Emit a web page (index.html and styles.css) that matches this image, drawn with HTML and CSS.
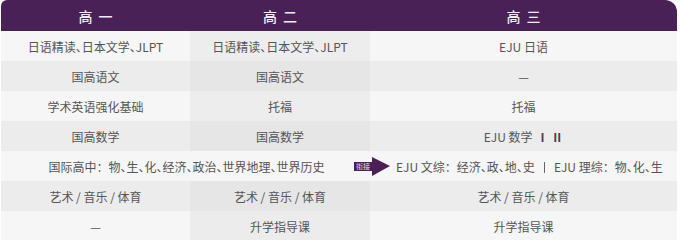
FILE: index.html
```html
<!DOCTYPE html>
<html lang="zh">
<head>
<meta charset="utf-8">
<link rel="stylesheet" href="styles.css">
</head>
<body>
<div class="table">
  <div class="head">高 一</div>
  <div class="head">高 二</div>
  <div class="head head-last">高 三</div>

  <div class="cell light">日语精读、日本文学、JLPT</div>
  <div class="cell light mid">日语精读、日本文学、JLPT</div>
  <div class="cell light">EJU 日语</div>

  <div class="cell dark">国高语文</div>
  <div class="cell dark mid">国高语文</div>
  <div class="cell dark">—</div>

  <div class="cell light">学术英语强化基础</div>
  <div class="cell light mid">托福</div>
  <div class="cell light">托福</div>

  <div class="cell dark">国高数学</div>
  <div class="cell dark mid">国高数学</div>
  <div class="cell dark">EJU 数学 <span class="roman">Ⅰ Ⅱ</span></div>

  <div class="cell light span2">国际高中<span class="full">：</span>物、生、化、经济、政治、世界地理、世界历史</div>
  <div class="cell light link">
    <span class="badge"><span class="badge-text">衔接</span><span class="arrow"></span></span>
    <span>EJU 文综<span class="full">：</span>经济、政、地、史<span class="bar"></span>EJU 理综<span class="full">：</span>物、化、生</span>
  </div>

  <div class="cell dark">艺术 / 音乐 / 体育</div>
  <div class="cell dark mid">艺术 / 音乐 / 体育</div>
  <div class="cell dark">艺术 / 音乐 / 体育</div>

  <div class="cell light">—</div>
  <div class="cell light mid dim">升学指导课</div>
  <div class="cell light">升学指导课</div>
</div>
</body>
</html>
```
FILE: styles.css
```css
html, body {
  margin: 0;
  padding: 0;
  background: #ffffff;
}
body {
  font-family: "Noto Sans CJK SC", "Noto Sans", sans-serif;
  color: #555555;
  font-feature-settings: "halt";
}
.table {
  width: 676px;
  margin-left: 1px;
  display: grid;
  grid-template-columns: 189px 180px 1fr;
  grid-template-rows: 31px repeat(7, 30px);
}
.head {
  background: #4a2157;
  color: #f0eaf2;
  font-size: 14px;
  font-weight: 500;
  display: flex;
  align-items: center;
  justify-content: center;
  word-spacing: 3px;
}
.head:first-child {
  border-top-left-radius: 6px;
}
.head-last {
  border-top-right-radius: 12px;
}
.cell {
  display: flex;
  align-items: center;
  justify-content: center;
  font-size: 12px;
  white-space: nowrap;
}
.full {
  font-feature-settings: normal;
}
.roman {
  margin-left: 4px;
  font-weight: 700;
  color: #444444;
}
.light { background: #f6f6f6; }
.dark { background: #ececec; }
.light.mid { background: #ededed; }
.dark.mid { background: #e6e6e6; }
.light.mid.dim { background: #ececec; }
.span2 {
  grid-column: 1 / span 2;
  padding-left: 2px;
}
.link {
  justify-content: flex-start;
}
.badge {
  display: inline-flex;
  align-items: center;
  margin-left: -16px;
  margin-right: 6px;
}
.badge-text {
  background: #4a2157;
  color: #e8dff0;
  font-size: 7px;
  line-height: 9px;
  height: 9px;
  width: 18px;
  text-align: center;
}
.arrow {
  width: 0;
  height: 0;
  border-top: 9px solid transparent;
  border-bottom: 10px solid transparent;
  border-left: 18px solid #4a2157;
}
.bar {
  display: inline-block;
  width: 1px;
  height: 11px;
  background: #666666;
  margin: 0 9px;
  vertical-align: -1px;
}
```
